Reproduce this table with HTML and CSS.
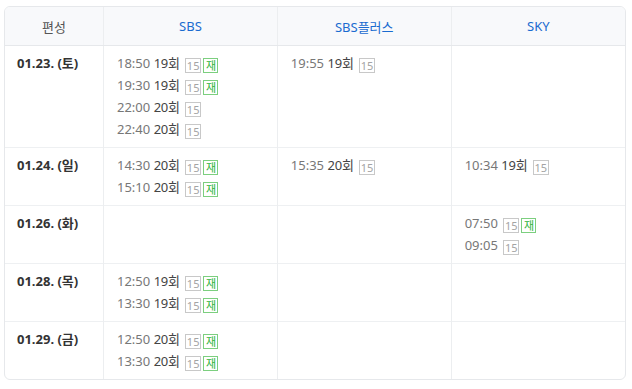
FILE: index.html
```html
<!DOCTYPE html>
<html lang="ko">
<head>
<meta charset="utf-8">
<link rel="stylesheet" href="styles.css">
</head>
<body>
<div class="wrap">
<table class="sched">
  <thead>
    <tr>
      <th class="c-date">편성</th>
      <th class="ch">SBS</th>
      <th class="ch">SBS플러스</th>
      <th class="ch">SKY</th>
    </tr>
  </thead>
  <tbody>
    <tr>
      <td class="date">01.23. (토)</td>
      <td>
        <div class="it"><span class="t">18:50</span> <span class="ep">19회</span><span class="b g">15</span><span class="b r">재</span></div>
        <div class="it"><span class="t">19:30</span> <span class="ep">19회</span><span class="b g">15</span><span class="b r">재</span></div>
        <div class="it"><span class="t">22:00</span> <span class="ep">20회</span><span class="b g">15</span></div>
        <div class="it"><span class="t">22:40</span> <span class="ep">20회</span><span class="b g">15</span></div>
      </td>
      <td>
        <div class="it"><span class="t">19:55</span> <span class="ep">19회</span><span class="b g">15</span></div>
      </td>
      <td></td>
    </tr>
    <tr>
      <td class="date">01.24. (일)</td>
      <td>
        <div class="it"><span class="t">14:30</span> <span class="ep">20회</span><span class="b g">15</span><span class="b r">재</span></div>
        <div class="it"><span class="t">15:10</span> <span class="ep">20회</span><span class="b g">15</span><span class="b r">재</span></div>
      </td>
      <td>
        <div class="it"><span class="t">15:35</span> <span class="ep">20회</span><span class="b g">15</span></div>
      </td>
      <td>
        <div class="it"><span class="t">10:34</span> <span class="ep">19회</span><span class="b g">15</span></div>
      </td>
    </tr>
    <tr>
      <td class="date">01.26. (화)</td>
      <td></td>
      <td></td>
      <td>
        <div class="it"><span class="t">07:50</span><span class="b g">15</span><span class="b r">재</span></div>
        <div class="it"><span class="t">09:05</span><span class="b g">15</span></div>
      </td>
    </tr>
    <tr>
      <td class="date">01.28. (목)</td>
      <td>
        <div class="it"><span class="t">12:50</span> <span class="ep">19회</span><span class="b g">15</span><span class="b r">재</span></div>
        <div class="it"><span class="t">13:30</span> <span class="ep">19회</span><span class="b g">15</span><span class="b r">재</span></div>
      </td>
      <td></td>
      <td></td>
    </tr>
    <tr>
      <td class="date">01.29. (금)</td>
      <td>
        <div class="it"><span class="t">12:50</span> <span class="ep">20회</span><span class="b g">15</span><span class="b r">재</span></div>
        <div class="it"><span class="t">13:30</span> <span class="ep">20회</span><span class="b g">15</span><span class="b r">재</span></div>
      </td>
      <td></td>
      <td></td>
    </tr>
  </tbody>
</table>
</div>
</body>
</html>
```
FILE: styles.css
```css
html, body {
  margin: 0;
  padding: 0;
  background: #fff;
}
body {
  padding: 6px 0 0 4px;
  font-family: "Noto Sans", "Noto Sans CJK KR", sans-serif;
  font-size: 13px;
  color: #333;
}
.wrap {
  width: 620px;
  border: 1px solid #e6e8eb;
  border-radius: 6px;
  overflow: hidden;
}
.sched {
  width: 100%;
  border-collapse: collapse;
  table-layout: fixed;
}
.sched th {
  height: 38px;
  padding: 0;
  background: #f8f9fb;
  font-weight: normal;
  font-size: 13px;
  color: #1a6bd0;
  border-bottom: 1px solid #e6e8eb;
  border-left: 1px solid #eceef0;
  text-align: center;
}
.sched th.c-date {
  width: 98px;
  color: #555;
  border-left: none;
}
.sched td {
  vertical-align: top;
  padding: 6px 0 7px 13px;
  border-top: 1px solid #eef0f2;
  border-left: 1px solid #eceef0;
}
.sched tbody tr:first-child td {
  border-top: none;
}
.sched td.date {
  border-left: none;
  padding-left: 12px;
  font-weight: bold;
  color: #333;
}
.it, .date {
  height: 22px;
  line-height: 22px;
  white-space: nowrap;
}
.t {
  color: #777;
}
.ep {
  color: #444;
  letter-spacing: -0.2px;
}
.b {
  display: inline-block;
  box-sizing: border-box;
  height: 15px;
  line-height: 13px;
  padding: 0 1px;
  min-width: 15px;
  text-align: center;
  font-size: 11px;
  vertical-align: -2px;
  border: 1px solid;
}
.b.g {
  margin-left: 5px;
  color: #a4a4a4;
  border-color: #c8c8c8;
}
.b.r {
  margin-left: 2px;
  color: #2db33a;
  border-color: #7ccf7f;
}
```
